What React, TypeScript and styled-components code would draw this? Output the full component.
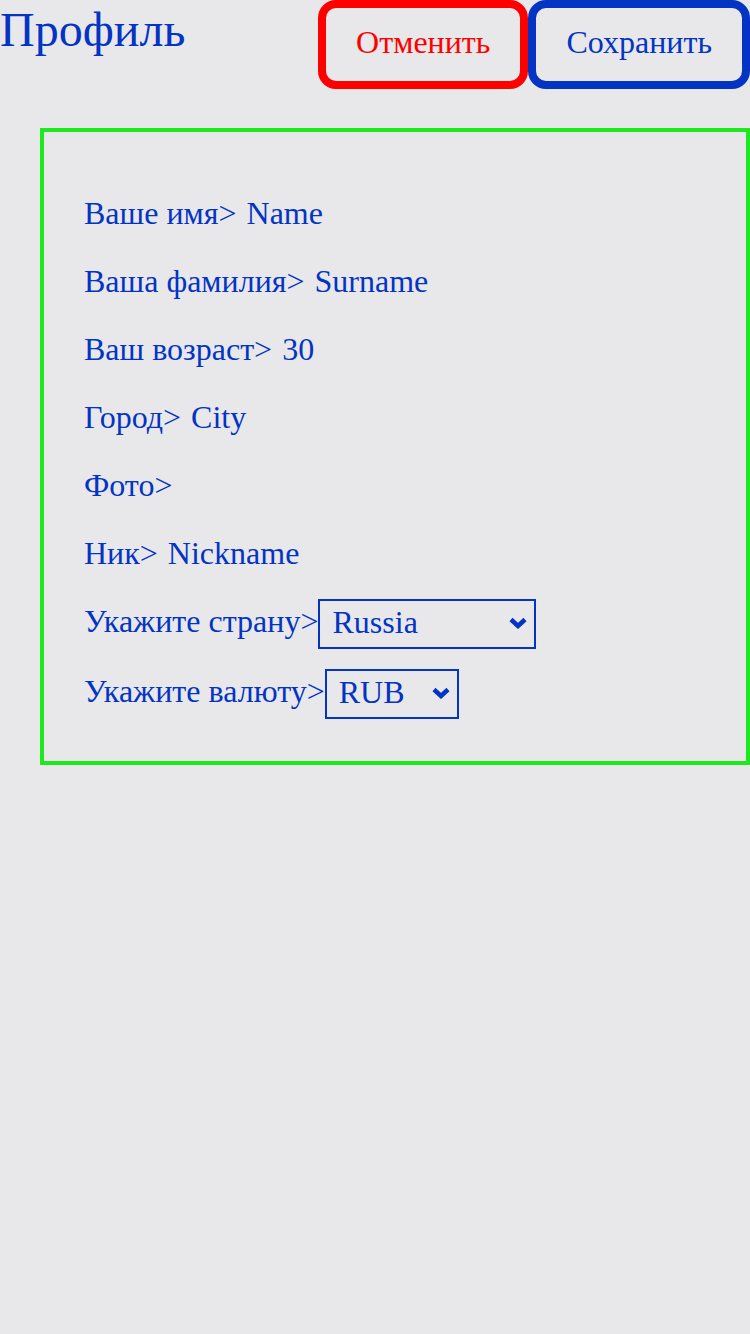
import { FC } from 'react';
import styled, { createGlobalStyle } from 'styled-components';

const GlobalStyle = createGlobalStyle`
  html, body {
    margin: 0;
    padding: 0;
    background: #e8e8ea;
  }
  body {
    font-family: "Liberation Serif", "Times New Roman", serif;
    color: #0434c4;
    width: 750px;
    min-height: 1334px;
  }
`;

const Page = styled.div`
  width: 750px;
`;

const Header = styled.header`
  display: flex;
  justify-content: space-between;
  align-items: flex-start;
`;

const Title = styled.h1`
  margin: 2px 0 0;
  font-size: 48px;
  font-weight: 400;
  line-height: normal;
`;

const Actions = styled.div`
  display: flex;
`;

const ActionButton = styled.button<{ $tone: string }>`
  font-family: inherit;
  font-size: 32px;
  line-height: normal;
  padding: 16px 30px 20px;
  margin: 0;
  background: transparent;
  color: ${p => p.$tone};
  border: 8px solid ${p => p.$tone};
  border-radius: 18px;
  cursor: pointer;
`;

const Card = styled.div`
  margin: 39px 0 0 40px;
  border: 4px solid #1ee81e;
  padding: 47px 40px 36px;
  display: flex;
  flex-direction: column;
`;

const Row = styled.div<{ $shift?: number }>`
  display: flex;
  align-items: baseline;
  font-size: 32px;
  line-height: 68px;
  white-space: pre;
  margin-top: ${p => p.$shift ?? 0}px;
`;

const Value = styled.span`
  margin-left: 2px;
`;

const SelectWrap = styled.span`
  position: relative;
  top: 1px;
  display: inline-flex;
  line-height: normal;
`;

const Select = styled.select`
  appearance: none;
  font-family: inherit;
  font-size: 32px;
  line-height: normal;
  color: #0434c4;
  background: transparent;
  border: 2px solid #0434c4;
  border-radius: 0;
  padding: 3px 52px 7px 12px;
  margin: 0;
`;

const Chevron = styled.svg`
  position: absolute;
  right: 8px;
  top: 50%;
  margin-top: -7px;
  pointer-events: none;
`;

const fields = [
  { label: 'Ваше имя>', value: 'Name' },
  { label: 'Ваша фамилия>', value: 'Surname' },
  { label: 'Ваш возраст>', value: '30' },
  { label: 'Город>', value: 'City' },
  { label: 'Фото>', value: '' },
  { label: 'Ник>', value: 'Nickname' },
];

const countries = ['Russia', 'Belarus', 'Kazakhstan'];
const currencies = ['RUB', 'EUR', 'USD'];

const Dropdown: FC<{ options: string[] }> = ({ options }) => (
  <SelectWrap>
    <Select defaultValue={options[0]}>
      {options.map(o => (
        <option key={o} value={o}>{o}</option>
      ))}
    </Select>
    <Chevron width="20" height="12" viewBox="0 0 20 12">
      <path d="M3 2.5 L10 9 L17 2.5" fill="none" stroke="#0434c4" strokeWidth="4.5" />
    </Chevron>
  </SelectWrap>
);

const App: FC = () => {
  return (
    <Page>
      <GlobalStyle />
      <Header>
        <Title>Профиль</Title>
        <Actions>
          <ActionButton $tone="#ff0000">Отменить</ActionButton>
          <ActionButton $tone="#0434c4">Сохранить</ActionButton>
        </Actions>
      </Header>
      <Card>
        {fields.map(f => (
          <Row key={f.label}>
            {f.label}
            {f.value && <Value> {f.value}</Value>}
          </Row>
        ))}
        <Row>
          Укажите страну&gt;<Dropdown options={countries} />
        </Row>
        <Row $shift={2}>
          Укажите валюту&gt;<Dropdown options={currencies} />
        </Row>
      </Card>
    </Page>
  );
}

export default App;
